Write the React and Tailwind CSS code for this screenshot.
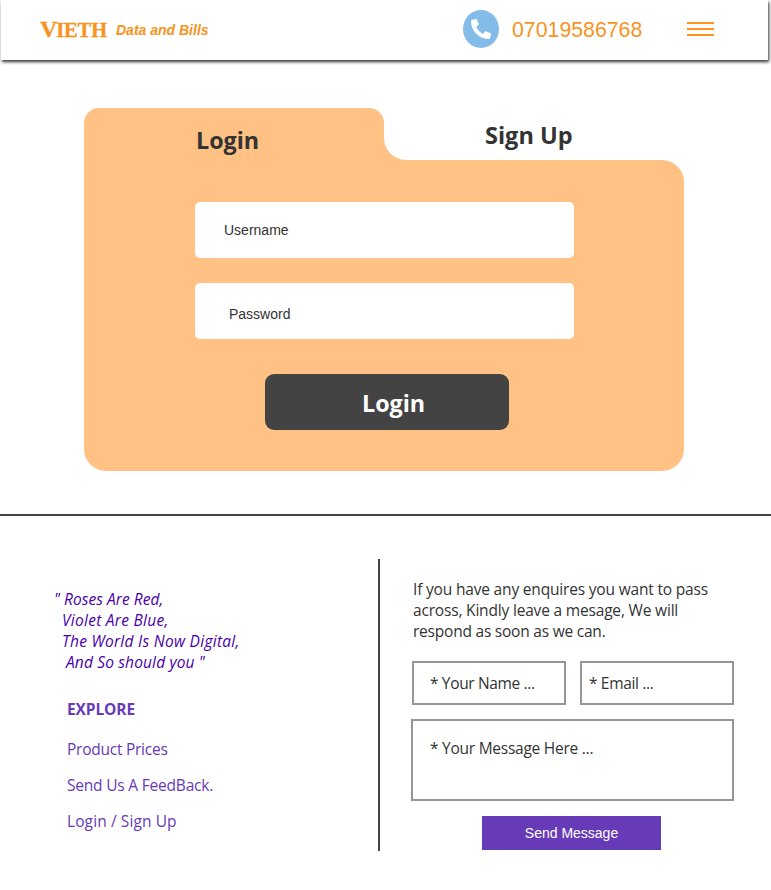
import { FaPhoneAlt } from "react-icons/fa";

const UI = "font-['Open_Sans',sans-serif]";
const ARIAL = "font-['Liberation_Sans',Arial,sans-serif]";

function Header() {
  return (
    <header className={`ml-px flex h-[60px] w-[767px] items-start bg-white pl-[39px] shadow-[1px_2px_3px_#333] ${ARIAL} text-[#f7931e]`}>
      <div className="flex h-[60px] w-[76px] items-baseline pt-[15px] font-['Liberation_Serif',serif] font-bold leading-[28px]">
        <span className="text-[24px] tracking-[-1.2px] [-webkit-text-stroke:0.3px_#f7931e]">V</span>
        <span className="text-[20.5px] tracking-[-0.1px] [-webkit-text-stroke:0.3px_#f7931e]">IETH</span>
      </div>
      <span className="mt-[20px] w-[347px] whitespace-nowrap text-[14px] font-bold italic leading-[20px]">Data and Bills</span>
      <div className="mt-[10px] flex h-[38px] w-[36px] items-center justify-center rounded-[50%] bg-[#83bce8]">
        <FaPhoneAlt className="h-[20px] w-[20px] text-white" />
      </div>
      <span className="ml-[13px] mt-[15px] w-[175px] whitespace-nowrap text-[21.3px] leading-[30px]">07019586768</span>
      <div className="mt-[22px] flex w-[27px] flex-col gap-[4px]">
        <i className="h-[2px] bg-[#ff931e]" />
        <i className="h-[2px] bg-[#ff931e]" />
        <i className="h-[2px] bg-[#ff931e]" />
      </div>
    </header>
  );
}

function LoginCard() {
  return (
    <main className={`mt-[48px] ml-[84px] w-[600px] ${UI} text-[#333]`}>
      <div className="flex h-[52px]">
        <div className="w-[300px] rounded-t-[15px] bg-[#ffc184] pl-[112px] pt-[16px]">
          <span className="block text-[23.3px] font-bold leading-[32px]">Login</span>
        </div>
        <div className="w-[300px] bg-[#ffc184]">
          <div className="h-full rounded-bl-[22px] bg-white pl-[101px] pt-[11px]">
            <span className="block text-[23.5px] font-bold leading-[32px]">Sign Up</span>
          </div>
        </div>
      </div>
      <div className="flex h-[311px] flex-col rounded-b-[22px] rounded-tr-[22px] bg-[#ffc184] pl-[110.5px] pt-[42px]">
        <div className={`flex h-[56px] w-[379px] items-center rounded-[5px] bg-white pl-[29.5px] text-[14px] ${ARIAL}`}>Username</div>
        <div className={`mt-[25px] flex h-[56px] w-[379px] items-center rounded-[5px] bg-white pl-[34.5px] pt-[6px] text-[14px] ${ARIAL}`}>Password</div>
        <div className="ml-[70.5px] mt-[35px] flex h-[56px] w-[244px] items-center rounded-[9px] bg-[#434343] pl-[97px] pt-[2px] text-[23.3px] font-bold leading-[32px] text-white">Login</div>
      </div>
    </main>
  );
}

function Explore() {
  return (
    <section className="w-[378px] pt-[30px] text-[#673ab7]">
      <div className="whitespace-nowrap text-[15.5px] italic leading-[21px] tracking-[0.27px] text-[#4a00a8]">
        <p className="pl-[54px] tracking-[0.05px]">" Roses Are Red,</p>
        <p className="pl-[62px]">Violet Are Blue,</p>
        <p className="pl-[62px]">The World Is Now Digital,</p>
        <p className="pl-[66px] tracking-[0.15px]">And So should you "</p>
      </div>
      <h2 className="ml-[67px] mt-[26px] text-[15.5px] font-bold leading-[21px] tracking-[-0.1px]">EXPLORE</h2>
      <ul className="ml-[67px] mt-[19px] flex flex-col gap-[15px] text-[15.5px] leading-[21px]">
        <li className="tracking-[-0.25px]">Product Prices</li>
        <li className="tracking-[-0.2px]">Send Us A FeedBack.</li>
        <li className="tracking-[0.1px]">Login / Sign Up</li>
      </ul>
    </section>
  );
}

function Contact() {
  return (
    <section className="flex h-[292px] w-[393px] flex-col border-l-2 border-[#434343] pl-[31px] pt-[20px] text-[15.5px] leading-[21px] text-[#333]">
      <div className="whitespace-nowrap pl-[2px] tracking-[-0.18px]">
        <p>If you have any enquires you want to pass</p>
        <p>across, Kindly leave a mesage, We will</p>
        <p className="tracking-[-0.22px]">respond as soon as we can.</p>
      </div>
      <div className="ml-px mt-[19px] flex gap-[14.5px] tracking-[-0.35px]">
        <div className="flex h-[44px] w-[153.5px] items-center border-2 border-[#969696] pl-[16px] pt-px">* Your Name ...</div>
        <div className="flex h-[44px] w-[153.5px] items-center border-2 border-[#969696] pl-[7px] pt-px">* Email ...</div>
      </div>
      <div className="mt-[14px] h-[82px] w-[322.5px] border-2 border-[#969696] pl-[17px] pt-[17px] tracking-[-0.25px]">* Your Message Here ...</div>
      <div className={`ml-[71px] mt-[15px] flex h-[34px] w-[179px] items-center justify-center bg-[#673ab7] text-[14px] text-white ${ARIAL}`}>Send Message</div>
    </section>
  );
}

export default function App() {
  return (
    <div className="h-[890px] w-[771px] overflow-hidden bg-white">
      <Header />
      <LoginCard />
      <footer className={`mt-[43px] flex border-t-2 border-[#434343] pt-[43px] ${UI}`}>
        <Explore />
        <Contact />
      </footer>
    </div>
  );
}
